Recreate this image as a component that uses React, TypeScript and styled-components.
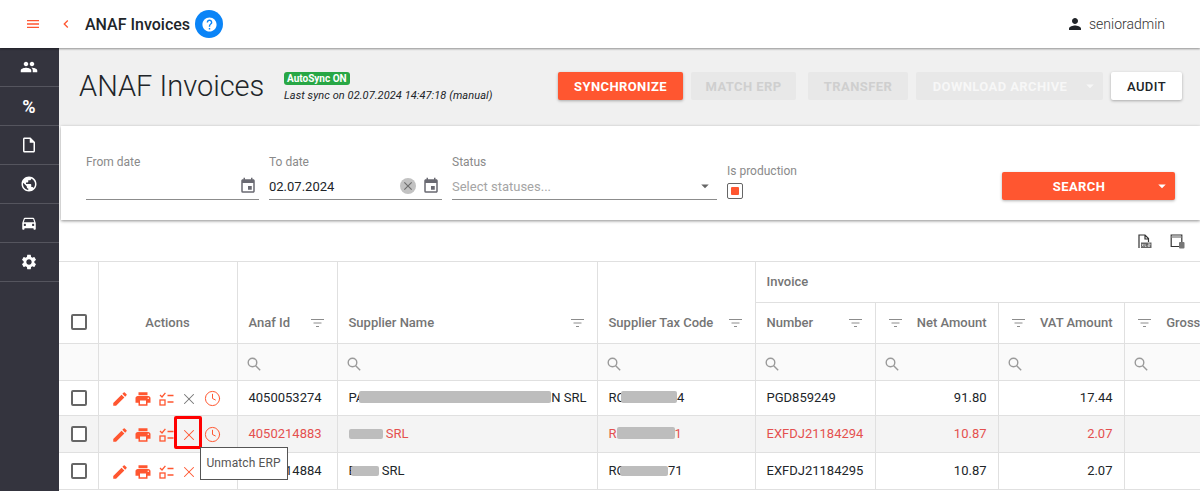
import React from "react";
import styled, { createGlobalStyle } from "styled-components";
import {
  MdMenu, MdChevronLeft, MdHelp, MdPerson, MdPeople, MdOutlineInsertDriveFile, MdPublic,
  MdDirectionsCar, MdSettings, MdEvent, MdClose, MdArrowDropDown, MdEdit, MdPrint,
} from "react-icons/md";
import { X, Clock } from "lucide-react";

const ORANGE = "#ff5630";

const Global = createGlobalStyle`
  html, body { margin: 0; padding: 0; height: 491px; overflow: hidden; background: #fff; }
  body { font-family: Roboto, "Liberation Sans", sans-serif; color: #212529; }
  * { box-sizing: border-box; }
`;

const Page = styled.div`
  width: 1200px; height: 491px; overflow: hidden; display: flex; flex-direction: column;
`;
const TopBar = styled.header`
  height: 48px; flex: none; display: flex; align-items: center; background: #fff;
  padding: 0 35px 0 24px; position: relative; z-index: 3; box-shadow: 0 1px 2px rgba(0,0,0,.4);
`;
const MenuBtn = styled.span`
  display: flex; justify-content: center; width: 18px; color: ${ORANGE}; font-size: 16px;
`;
const BackBtn = styled.span`
  display: flex; color: ${ORANGE}; font-size: 16px; margin-left: 16px; width: 27px;
`;
const TopTitle = styled.h1`
  margin: 0; font-size: 16px; font-weight: 500; color: #212529;
`;
const HelpBadge = styled.span`
  width: 28px; height: 28px; border-radius: 50%; background: #0a84f7; color: #fff; margin-left: 5px;
  display: flex; align-items: center; justify-content: center; font-size: 17px;
`;
const UserBox = styled.div`
  margin-left: auto; display: flex; align-items: center; gap: 5px; font-size: 14px; color: #333; font-weight: 300;
  svg { font-size: 18px; color: #212529; }
`;
const Body = styled.div`
  flex: 1; display: flex; min-height: 0;
`;
const Sidebar = styled.nav`
  width: 59px; flex: none; background: #34343e; color: #fff; display: flex; flex-direction: column;
`;
const SideItem = styled.div`
  height: 39px; flex: none; display: flex; align-items: center; justify-content: center; font-size: 18px;
  border-bottom: 1px solid #55555e; font-weight: 700; padding-right: 1px;
`;
const Main = styled.main`
  flex: 1; min-width: 0; display: flex; flex-direction: column; background: #fff;
`;
const PageHead = styled.div`
  height: 78px; flex: none; background: #f0f0f0; display: flex; align-items: flex-start; padding: 24px 18px 0 20px;
`;
const BigTitle = styled.h2`
  margin: -4px 0 0; font-size: 29px; line-height: 36px; font-weight: 300; color: #212529; width: 205px; flex: none;
`;
const SyncInfo = styled.div`
  display: flex; flex-direction: column; align-items: flex-start; gap: 4px;
`;
const Badge = styled.span`
  background: #28a745; color: #fff; font-size: 10px; line-height: 13px; font-weight: 700; padding: 0 3px; border-radius: 3px;
`;
const LastSync = styled.span`
  font-size: 11px; line-height: 14px; font-style: italic; color: #212529; letter-spacing: .07px;
`;
const Actions = styled.div`
  margin-left: auto; display: flex; gap: 8px;
`;
const Btn = styled.button<{ $w: number; $kind: "primary" | "disabled" | "plain" | "ghost"; $gap?: number; $split?: boolean }>`
  width: ${p => p.$w}px; height: 28px; border: 0; border-radius: 2px; flex: none;
  padding: 0 ${p => (p.$split ? 19 : 0)}px 0 0;
  font: 700 13px Roboto, sans-serif; letter-spacing: .4px; text-transform: uppercase;
  display: flex; align-items: center; justify-content: center; position: relative;
  margin-left: ${p => p.$gap ?? 0}px;
  background: ${p => (p.$kind === "primary" ? ORANGE : p.$kind === "plain" ? "#fff" : "#e8e8e8")};
  color: ${p => (p.$kind === "primary" ? "#fff" : p.$kind === "plain" ? "#212529" : p.$kind === "ghost" ? "#f7f7f7" : "#cfcfcf")};
  font-weight: ${p => (p.$kind === "plain" ? 500 : 700)};
  box-shadow: ${p => (p.$kind === "primary" || p.$kind === "plain" ? "0 1px 3px rgba(0,0,0,.3)" : "none")};
`;
const SplitArrow = styled.span`
  position: absolute; right: 4px; top: 50%; transform: translateY(-50%); display: flex; font-size: 18px;
`;
const FilterCard = styled.section`
  height: 94px; flex: none; margin-left: 2px; background: #fff; display: flex; align-items: flex-start;
  padding: 0 25px; box-shadow: 0 1px 3px rgba(0,0,0,.45); position: relative; z-index: 1;
`;
const Field = styled.div<{ $w: number }>`
  width: ${p => p.$w}px; flex: none; margin-right: 10px; padding-top: 28px;
`;
const FieldLabel = styled.div`
  font-size: 12px; line-height: 16px; color: #8a8a8a;
`;
const FieldInput = styled.div`
  height: 27px; margin-top: 3px; border-bottom: 1px solid #8c8c8c; display: flex; align-items: center; gap: 3px;
  font-size: 13px; color: #212529; svg { flex: none; }
`;
const InputText = styled.span<{ $ph?: boolean }>`
  flex: 1; color: ${p => (p.$ph ? "#a5a5a5" : "#212529")};
`;
const CalIcon = styled(MdEvent)`
  color: #6a6a72; font-size: 18px; margin-right: 2px;
`;
const ClearBtn = styled.span`
  width: 16px; height: 16px; border-radius: 50%; background: #c2c2c2; color: #6e6e6e; display: flex; align-items: center;
  justify-content: center; font-size: 14px; flex: none; margin-right: 3px;
`;
const StatusArrow = styled(MdArrowDropDown)`
  color: #666; font-size: 18px; margin-right: 3px;
`;
const ProdField = styled.div`
  width: 100px; padding-top: 37px; flex: none;
`;
const ProdBox = styled.span`
  width: 16px; height: 16px; margin-top: 4px; border: 1px solid #666; border-radius: 2px; display: flex; align-items: center; justify-content: center;
  &::after { content: ""; width: 8px; height: 8px; border-radius: 1px; background: ${ORANGE}; }
`;
const SearchBtn = styled(Btn)`
  margin: 46px 0 0 auto;
`;
const Tools = styled.div`
  height: 41px; flex: none; display: flex; align-items: center; justify-content: flex-end; gap: 18px; padding: 1px 15px 0 0;
`;
const TableWrap = styled.div`
  flex: 1; overflow: hidden; min-height: 0;
`;
const Grid = styled.table`
  border-collapse: collapse; table-layout: fixed; width: 1202px; font-size: 13px;
  border-top: 1px solid #e0e0e0;
`;
const HeadCell = styled.th<{ $center?: boolean }>`
  border: 1px solid #e0e0e0; border-top: 0; padding: 0 0 1px; height: 41px; vertical-align: middle; font-weight: 500; font-size: 13px;
  color: #757575; text-align: ${p => (p.$center ? "center" : "left")};
  &:first-child { border-left: 0; }
`;
const SpanCell = styled(HeadCell)`
  vertical-align: bottom; padding-bottom: 13px;
`;
const GroupCell = styled(HeadCell)`
  padding-left: 11px; border-right: 0;
`;
const HeadInner = styled.div<{ $right?: boolean }>`
  display: flex; align-items: center; justify-content: space-between;
  padding: ${p => (p.$right ? "0 11px 0 13px" : "0 13px 0 11px")};
  white-space: nowrap;
`;
const FilterRow = styled.tr`
  background: #fafafa; height: 37px;
`;
const FilterCell = styled.td`
  border: 1px solid #e0e0e0; padding: 3px 0 0 9px; vertical-align: middle;
  &:first-child { border-left: 0; }
  svg { display: block; }
`;
const Row = styled.tr<{ $active?: boolean; $first?: boolean }>`
  height: ${p => (p.$first ? 35 : 37)}px; background: ${p => (p.$active ? "#f4f4f4" : "#fff")}; color: ${p => (p.$active ? "#e4504f" : "#212529")};
`;
const Cell = styled.td<{ $right?: boolean }>`
  border: 1px solid #e0e0e0; padding: 0 11px 2px; white-space: nowrap; text-align: ${p => (p.$right ? "right" : "left")};
  overflow: hidden;
  &:first-child { border-left: 0; }
`;
const CheckCell = styled(Cell)`
  padding: 0 0 0 12px;
`;
const Check = styled.span`
  display: block; width: 16px; height: 16px; border: 2px solid #666; border-radius: 2px; background: #fff;
`;
const HeadCheck = styled(Check)`
  margin-left: 12px;
`;
const ActionCell = styled(Cell)`
  padding: 0 0 0 10px; overflow: visible;
`;
const IconRow = styled.div`
  display: flex; align-items: center; height: 18px; margin-top: 1px; position: relative;
`;
const ActionIcon = styled.span<{ $muted?: boolean }>`
  width: 23px; display: flex; justify-content: center; flex: none; font-size: 18px;
  color: ${p => (p.$muted ? "#757575" : ORANGE)};
`;
const Highlight = styled.span`
  position: absolute; left: 65px; top: -10px; width: 28px; height: 33px; border: 3px solid #f00; border-radius: 2px; z-index: 3;
`;
const Hint = styled.div`
  position: absolute; left: 91px; top: 21px; width: 88px; height: 33px; z-index: 4; background: #fff; border: 1px solid #555;
  font-size: 12px; line-height: 30px; letter-spacing: .1px; text-align: center; color: #555;
`;
const Blur = styled.span<{ $w: number; $h?: number; $ml?: number }>`
  display: inline-block; width: ${p => p.$w}px; height: ${p => p.$h ?? 12}px; margin-left: ${p => p.$ml ?? 0}px;
  background: #bdbdbd; border-radius: 2px; vertical-align: -1px;
`;

const FilterGlyph = () => (
  <svg width="13" height="10" viewBox="0 0 13 10" fill="none" stroke="#8c8c8c" strokeWidth="1">
    <path d="M0 1.5h13M2.5 5h8M5 8.5h3" />
  </svg>
);
const Lens = () => (
  <svg width="14" height="14" viewBox="0 0 14 14" fill="none" stroke="#9a9a9a" strokeWidth="1.4">
    <circle cx="5.5" cy="5.5" r="4.3" />
    <path d="M8.7 8.7l4.5 4.5" />
  </svg>
);
const Checklist = () => (
  <svg width="15" height="14" viewBox="0 0 15 14" fill="none" stroke={ORANGE} strokeWidth="1.3">
    <path d="M1 3l2 2 3.4-4.2M8.5 3.5h6M8.5 10h6" />
    <rect x="1" y="8" width="5" height="5" />
  </svg>
);
const XlsFile = () => (
  <svg width="15" height="15" viewBox="0 0 15 15" fill="none" stroke="#333" strokeWidth="1.2">
    <path d="M2 14V1h6l3.5 3.5V8M8 1v4h3.5" />
    <rect x="4" y="8.5" width="10.5" height="5.5" fill="#666" stroke="none" />
    <path d="M5 10l1.4 2.4M6.4 10L5 12.4M8 10v2.4h1.4M11 10h2v1.2h-2v1.2h2" stroke="#eee" strokeWidth=".7" />
  </svg>
);
const PdfSheet = () => (
  <svg width="15" height="15" viewBox="0 0 15 15" fill="none">
    <path d="M10 12.5H1.2V1h10.6v7" stroke="#333" strokeWidth="1.2" />
    <path d="M1.2 3h10.6" stroke="#888" strokeWidth="1.4" />
    <rect x="9" y="8" width="5.5" height="6.5" rx="1" fill="#777" />
  </svg>
);

type RowIcons = { muted?: boolean; marked?: boolean };
const RowActions = ({ muted, marked }: RowIcons) => (
  <IconRow>
    <ActionIcon><MdEdit /></ActionIcon>
    <ActionIcon><MdPrint /></ActionIcon>
    <ActionIcon><Checklist /></ActionIcon>
    <ActionIcon $muted={muted}><X size={18} strokeWidth={1.4} /></ActionIcon>
    <ActionIcon><Clock size={17} strokeWidth={1.4} /></ActionIcon>
    {marked && <Highlight />}
    {marked && <Hint>Unmatch ERP</Hint>}
  </IconRow>
);

const cols = [39, 139, 100, 260, 158, 120, 123, 126, 137];
const lowerHeads = [
  { t: "Number" },
  { t: "Net Amount", r: true },
  { t: "VAT Amount", r: true },
  { t: "Gross Amount", r: true },
];

const rows = [
  {
    id: "4050053274",
    name: <>PA<Blur $w={192} $ml={-5} />N SRL</>,
    tax: <>RC<Blur $w={56} $ml={-4} />4</>,
    num: "PGD859249", net: "91.80", vat: "17.44", muted: true, first: true,
  },
  {
    id: "4050214883", active: true, marked: true,
    name: <><Blur $w={34} $h={10} /> SRL</>,
    tax: <>R<Blur $w={58} />1</>,
    num: "EXFDJ21184294", net: "10.87", vat: "2.07",
  },
  {
    id: "4050214884",
    name: <>B<Blur $w={28} $h={10} $ml={-6} /> SRL</>,
    tax: <>RC<Blur $w={48} $h={10} $ml={-5} />71</>,
    num: "EXFDJ21184295", net: "10.87", vat: "2.07",
  },
];

export default function App() {
  return (
    <Page>
      <Global />
      <TopBar>
        <MenuBtn><MdMenu /></MenuBtn>
        <BackBtn><MdChevronLeft /></BackBtn>
        <TopTitle>ANAF Invoices</TopTitle>
        <HelpBadge><MdHelp /></HelpBadge>
        <UserBox><MdPerson />senioradmin</UserBox>
      </TopBar>
      <Body>
        <Sidebar>
          <SideItem><MdPeople /></SideItem>
          <SideItem>%</SideItem>
          <SideItem><MdOutlineInsertDriveFile /></SideItem>
          <SideItem><MdPublic /></SideItem>
          <SideItem><MdDirectionsCar /></SideItem>
          <SideItem><MdSettings /></SideItem>
        </Sidebar>
        <Main>
          <PageHead>
            <BigTitle>ANAF Invoices</BigTitle>
            <SyncInfo>
              <Badge>AutoSync ON</Badge>
              <LastSync>Last sync on 02.07.2024 14:47:18 (manual)</LastSync>
            </SyncInfo>
            <Actions>
              <Btn $w={125} $kind="primary">Synchronize</Btn>
              <Btn $w={105} $kind="disabled">Match ERP</Btn>
              <Btn $w={100} $kind="disabled" $gap={4}>Transfer</Btn>
              <Btn $w={187} $kind="ghost" $split>Download archive<SplitArrow><MdArrowDropDown /></SplitArrow></Btn>
              <Btn $w={71} $kind="plain">Audit</Btn>
            </Actions>
          </PageHead>
          <FilterCard>
            <Field $w={173}>
              <FieldLabel>From date</FieldLabel>
              <FieldInput><InputText /><CalIcon /></FieldInput>
            </Field>
            <Field $w={173}>
              <FieldLabel>To date</FieldLabel>
              <FieldInput>
                <InputText>02.07.2024</InputText>
                <ClearBtn><MdClose /></ClearBtn>
                <CalIcon />
              </FieldInput>
            </Field>
            <Field $w={265}>
              <FieldLabel>Status</FieldLabel>
              <FieldInput>
                <InputText $ph>Select statuses...</InputText>
                <StatusArrow />
              </FieldInput>
            </Field>
            <ProdField>
              <FieldLabel>Is production</FieldLabel>
              <ProdBox />
            </ProdField>
            <SearchBtn $w={173} $kind="primary" $split>Search<SplitArrow><MdArrowDropDown /></SplitArrow></SearchBtn>
          </FilterCard>
          <Tools><XlsFile /><PdfSheet /></Tools>
          <TableWrap>
            <Grid>
              <colgroup>
                {cols.map((w, i) => <col key={i} style={{ width: w }} />)}
              </colgroup>
              <thead>
                <tr>
                  <SpanCell rowSpan={2}><HeadCheck /></SpanCell>
                  <SpanCell rowSpan={2} $center>Actions</SpanCell>
                  <SpanCell rowSpan={2}><HeadInner>Anaf Id<FilterGlyph /></HeadInner></SpanCell>
                  <SpanCell rowSpan={2}><HeadInner>Supplier Name<FilterGlyph /></HeadInner></SpanCell>
                  <SpanCell rowSpan={2}><HeadInner>Supplier Tax Code<FilterGlyph /></HeadInner></SpanCell>
                  <GroupCell colSpan={4}>Invoice</GroupCell>
                </tr>
                <tr>
                  {lowerHeads.map(h => (
                    <HeadCell key={h.t}>
                      <HeadInner $right={h.r}>
                        {h.r ? <><FilterGlyph />{h.t}</> : <>{h.t}<FilterGlyph /></>}
                      </HeadInner>
                    </HeadCell>
                  ))}
                </tr>
              </thead>
              <tbody>
                <FilterRow>
                  <FilterCell />
                  <FilterCell />
                  {cols.slice(2).map((_, i) => <FilterCell key={i}><Lens /></FilterCell>)}
                </FilterRow>
                {rows.map(r => (
                  <Row key={r.id} $active={r.active} $first={r.first}>
                    <CheckCell><Check /></CheckCell>
                    <ActionCell><RowActions muted={r.muted} marked={r.marked} /></ActionCell>
                    <Cell>{r.id}</Cell>
                    <Cell>{r.name}</Cell>
                    <Cell>{r.tax}</Cell>
                    <Cell>{r.num}</Cell>
                    <Cell $right>{r.net}</Cell>
                    <Cell $right>{r.vat}</Cell>
                    <Cell $right />
                  </Row>
                ))}
              </tbody>
            </Grid>
          </TableWrap>
        </Main>
      </Body>
    </Page>
  );
}
